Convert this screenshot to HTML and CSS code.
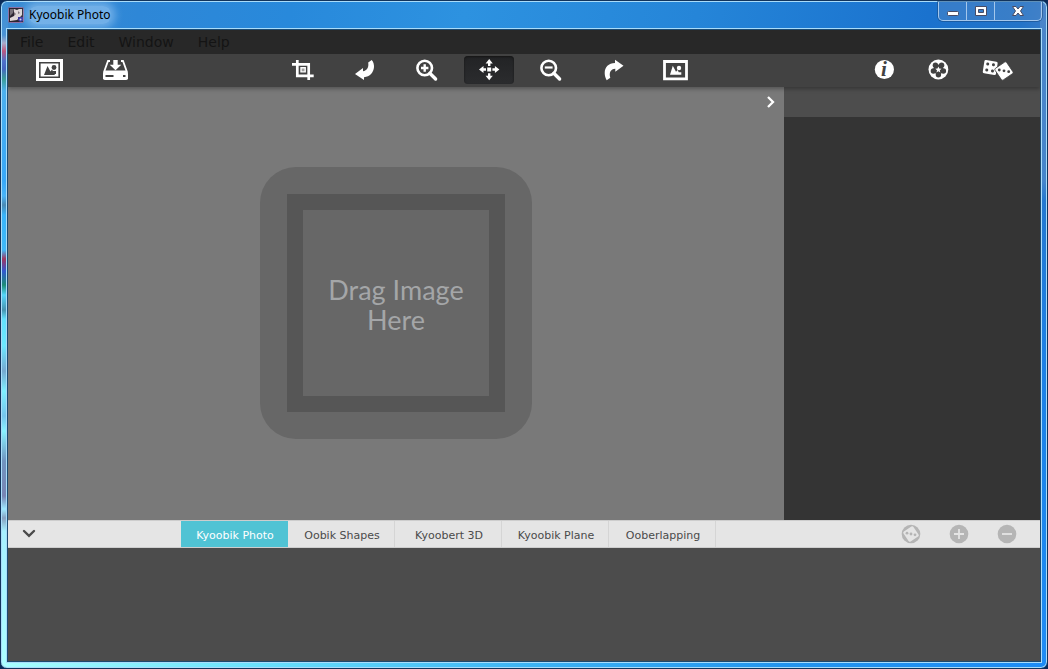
FILE: index.html
```html
<!DOCTYPE html>
<html lang="en">
<head>
<meta charset="utf-8">
<title>Kyoobik Photo</title>
<link rel="stylesheet" href="styles.css">
</head>
<body>
<div class="window">
  <header class="titlebar">
    <svg class="app-icon" width="16" height="16" viewBox="0 0 16 16" aria-hidden="true">
      <rect x=".5" y=".5" width="15" height="15" rx="1" fill="#2c2530" stroke="#8d71a5"/>
      <path d="M2 2h4l-1 4-3 3z" fill="#777078"/>
      <path d="M6 2l3 1 2-1 3 0v6l-3 3-2 2-7 1V11l4-2z" fill="#e0d8d8"/>
      <path d="M6 5l2 2-2 2zM10 4l2 2-2 1z" fill="#81777d"/>
      <path d="M10 10l5 0v4l-3 1-2-2z" fill="#37349b"/>
      <circle cx="12.500" cy="12.500" r="1" fill="#d1ccf6"/>
    </svg>
    <h1 class="title">Kyoobik Photo</h1>
    <div class="window-controls">
      <button class="control" aria-label="Minimize"><svg width="14" height="14" viewBox="0 0 14 14"><rect x="1.500" y="7.500" width="11" height="4" rx="1" fill="#fff" stroke="#484c66"/></svg></button>
      <button class="control" aria-label="Maximize"><svg width="14" height="14" viewBox="0 0 14 14"><path fill-rule="evenodd" d="M1.500 2.500h11v9h-11zM4.500 5.500h5v3h-5z" fill="#fff" stroke="#484c66"/></svg></button>
      <button class="control control-close" aria-label="Close"><svg width="14" height="14" viewBox="0 0 14 14"><path d="M1.500 2.500h3.500l2 2.500 2-2.500h3.500L9.500 7l3 4.500H9L7 9l-2 2.500H1.500l3-4.500z" fill="#fff" stroke="#484c66"/></svg></button>
    </div>
  </header>

  <div class="client">
    <nav class="menubar" aria-label="Application menu">
      <button class="menu">File</button>
      <button class="menu">Edit</button>
      <button class="menu">Window</button>
      <button class="menu">Help</button>
    </nav>

    <div class="toolbar">
      <div class="tools tools-file">
        <button class="tool" aria-label="Open image"><svg class="icon" viewBox="0 0 32 24">
          <path d="M2 1h27v22H2z" fill="#fff"/>
          <path d="M5.800 4.800h19.400v14.400H5.800z" fill="none" stroke="#424242" stroke-width="1.600"/>
          <path d="M10 17l3.500-9 3 5.500 1.500-2 3 5.500z" fill="#424242"/><circle cx="20" cy="9.500" r="2.400" fill="#424242"/><path d="M18.500 13h3.500v3h-2z" fill="#424242"/></svg></button>
        <button class="tool" aria-label="Save image"><svg class="icon" viewBox="0 0 32 24">
          <path d="M10 3H8L4.200 13.500h22.600L23 3h-2" fill="none" stroke="#fff" stroke-width="1.800"/>
          <rect x="3" y="13.500" width="25" height="8.500" rx="1.800" fill="#fff"/>
          <path d="M5.500 17h8v2h-8zM23 17h2.500v2H23z" fill="#424242"/>
          <path d="M13.300 2h4.400v4.800h3.600l-5.800 5.500-5.800-5.500h3.600z" fill="#fff"/></svg></button>
      </div>
      <div class="tools tools-view">
        <button class="tool" aria-label="Crop"><svg class="icon" viewBox="0 0 32 24">
          <path d="M5 6.300h16.700V22M10.300 2v15.800h16.400" fill="none" stroke="#fff" stroke-width="2.700"/>
          <path d="M14 9.700h4.200v4.200H14z" fill="#a2a2a2" stroke="#fff" stroke-width="1.400"/></svg></button>
        <button class="tool" aria-label="Rotate left"><svg class="icon" viewBox="0 0 32 24">
          <path d="M6 16l8-6v3.200c4-.5 6-3.700 5.200-8.700L22.700 2c1.700 2 2.500 4.500 2.300 7-.4 5.500-4 9.500-10 10.300V22z" fill="#fff"/></svg></button>
        <button class="tool" aria-label="Zoom in"><svg class="icon" viewBox="0 0 32 24">
          <circle cx="13.700" cy="10" r="7.300" fill="none" stroke="#fff" stroke-width="2.600"/><path d="M18.800 15.200l5.800 5.800" stroke="#fff" stroke-width="3.400" stroke-linecap="round"/><path d="M10 10h7.400M13.700 6.300v7.400" stroke="#fff" stroke-width="2.400"/></svg></button>
        <button class="tool tool-active" aria-label="Move" aria-pressed="true"><svg class="icon" viewBox="0 0 32 24">
          <path d="M14.200 9.500h4v4h-4zM16.200 1l3.600 4.600h-2.400V8H15V5.600h-2.400zM16.200 22.300l3.600-4.600h-2.400v-2.400H15v2.400h-2.400zM6 11.500L10.500 8v2.300H13v2.400h-2.500V15zM26.400 11.500L21.900 8v2.300h-2.500v2.400h2.500V15z" fill="#fff"/></svg></button>
        <button class="tool" aria-label="Zoom out"><svg class="icon" viewBox="0 0 32 24">
          <circle cx="13.700" cy="10" r="7.300" fill="none" stroke="#fff" stroke-width="2.600"/><path d="M18.800 15.200l5.800 5.800" stroke="#fff" stroke-width="3.400" stroke-linecap="round"/><path d="M9.800 9.500h7.800" stroke="#fff" stroke-width="2.200"/></svg></button>
        <button class="tool" aria-label="Rotate right"><svg class="icon" viewBox="0 0 32 24">
          <path d="M26.500 7.800L18 1.800V5C11.500 5.300 7.700 9 7.700 15c0 2.700.7 5.200 2 7.200l3.600-2.400c-1.500-5 .2-8.600 5-9v3z" fill="#fff"/></svg></button>
        <button class="tool" aria-label="Fit image"><svg class="icon" viewBox="0 0 32 24">
          <path d="M5.500 3.500h22v17.300h-22z" fill="none" stroke="#fff" stroke-width="2.800"/>
          <path d="M11 16.800l2.800-9 3.200 6 1.700-1.800 1 2.300h2.600v2.500z" fill="#fff"/><circle cx="20" cy="10" r="2.200" fill="#fff"/></svg></button>
      </div>
      <div class="tools tools-extra">
        <button class="tool" aria-label="Information"><svg class="icon" viewBox="0 0 32 24">
          <circle cx="15.400" cy="11.500" r="9.600" fill="#fff"/><text class="info-letter" x="15" y="18" text-anchor="middle">i</text></svg></button>
        <button class="tool" aria-label="Effects"><svg class="icon" viewBox="0 0 32 24">
          <circle cx="15.400" cy="11.500" r="9.900" fill="#fff"/>
          <g fill="#424242"><circle cx="12.400" cy="7.200" r="2.700"/><circle cx="18.600" cy="7.200" r="2.700"/><circle cx="20.400" cy="13" r="2.700"/><circle cx="15.400" cy="16.700" r="2.700"/><circle cx="10.400" cy="13" r="2.700"/><circle cx="15.400" cy="11.500" r="5"/></g>
          <path d="M15.400 8.500l.9 2.100 2.200.2-1.700 1.500.5 2.200-1.900-1.200-1.900 1.200.5-2.200-1.700-1.500 2.200-.2z" fill="#fff"/></svg></button>
        <button class="tool tool-wide" aria-label="Randomize"><svg class="icon" viewBox="0 0 32 24">
          <g transform="rotate(9 8 9.500)"><rect x="1.500" y="2.800" width="13.400" height="13.400" rx="1.500" fill="#fff"/><g fill="#424242"><circle cx="5.200" cy="6.300" r="1.500"/><circle cx="11" cy="6.300" r="1.500"/><circle cx="5.200" cy="12.500" r="1.500"/><circle cx="11" cy="12.500" r="1.500"/></g></g>
          <g transform="rotate(-34 22 13)"><rect x="15" y="6" width="14" height="14" rx="1.500" fill="#fff" stroke="#424242" stroke-width=".8"/></g>
          <g fill="#424242"><circle cx="17.300" cy="12" r="1.400"/><circle cx="22" cy="12.800" r="1.400"/><circle cx="26.700" cy="13.700" r="1.400"/></g></svg></button>
      </div>
    </div>

    <div class="workspace">
      <main class="canvas">
        <button class="panel-toggle" aria-label="Collapse side panel"><svg width="10" height="14" viewBox="0 0 10 14"><path d="M2 2l5 5-5 5" fill="none" stroke="#fff" stroke-width="2.300"/></svg></button>
        <div class="dropzone"><p class="dropzone-target">Drag Image<br>Here</p></div>
      </main>
      <aside class="sidebar" aria-label="Settings"><div class="sidebar-head"></div></aside>
    </div>

    <div class="tabbar">
      <button class="tray-toggle" aria-label="Collapse tray"><svg width="14" height="10" viewBox="0 0 14 10"><path d="M2 2l5 4.800L12 2" fill="none" stroke="#4a4a4a" stroke-width="2.400" stroke-linecap="round"/></svg></button>
      <div class="tabs" role="tablist">
        <button class="tab tab-active" role="tab" aria-selected="true">Kyoobik Photo</button>
        <button class="tab" role="tab">Oobik Shapes</button>
        <button class="tab" role="tab">Kyoobert 3D</button>
        <button class="tab" role="tab">Kyoobik Plane</button>
        <button class="tab" role="tab">Ooberlapping</button>
      </div>
      <div class="preset-actions">
        <button class="preset" aria-label="Random preset"><svg width="20" height="20" viewBox="0 0 20 20"><circle cx="10" cy="10" r="9.300" fill="#b5b5b5"/><rect x="4" y="4" width="12" height="12" rx="1.500" fill="#e5e5e5" transform="rotate(-34 10 10)"/><g fill="#b5b5b5"><circle cx="6" cy="9.200" r="1.400"/><circle cx="10" cy="10" r="1.400"/><circle cx="14" cy="10.800" r="1.400"/></g></svg></button>
        <button class="preset" aria-label="Add preset"><svg width="20" height="20" viewBox="0 0 20 20"><circle cx="10" cy="10" r="9.300" fill="#b5b5b5"/><path d="M5 10h10M10 5v10" stroke="#e5e5e5" stroke-width="1.800"/></svg></button>
        <button class="preset" aria-label="Remove preset"><svg width="20" height="20" viewBox="0 0 20 20"><circle cx="10" cy="10" r="9.300" fill="#b5b5b5"/><path d="M5 10h10" stroke="#e5e5e5" stroke-width="1.800"/></svg></button>
      </div>
    </div>
    <section class="tray" aria-label="Presets"></section>
  </div>
</div>
</body>
</html>
```

FILE: styles.css
```css
* { box-sizing: border-box; }

body {
  margin: 0;
  background: #0b2a58;
  font-family: "DejaVu Sans", Verdana, sans-serif;
}

button {
  margin: 0;
  padding: 0;
  border: 0;
  background: none;
  color: inherit;
  font: inherit;
}

svg { display: block; }

/* Glass window frame */
.window {
  display: flex;
  flex-direction: column;
  min-height: 100vh;
  padding: 1px 5px 6px;
  border: 1px solid #12345c;
  border-radius: 7px;
  box-shadow: inset 0 0 0 1px #a9dcfa;
  background:
    linear-gradient(180deg, #3d8fd6 0, #4a93d5 34px, #a7accb 42px, #bd587f 50px, #4e71ca 60px, #4666c0 68px, #3b9d98 78px, #4cb0ee 90px, #38a8f8 180px, #49b4f8 195px, #4a8ab5 204px, #38b4fa 214px, #40b8f8 249px, #a03660 258px, #3258d0 270px, #1c8c77 284px, #55d5fa 294px, #4793b0 309px, #62e0fc 318px, #6ce8ff 345px, #76a9d0 370px, #7ef0ff 390px, #76c5ec 415px, #88f2ff 430px, #7094c0 460px, #7885b4 495px, #9de9ff 508px, #86a0c0 517px, #a6f0ff 530px, #abffff 100%) left / 7px 100% no-repeat,
    linear-gradient(180deg, #4b85c9 0, #4685cb 180px, #2478d0 200px, #1e80e4 350px, #1d8cf5 100%) right / 7px 100% no-repeat,
    linear-gradient(90deg, #a8ffff 0, #68e0fc 25%, #3db4f4 50%, #2294ee 75%, #1d8cf5 100%) bottom / 100% 8px no-repeat,
    linear-gradient(100deg, #3b8cd3 0, #2e87d7 12%, #2889db 25%, #2d92e0 40%, #2585d8 60%, #1a72ce 80%, #2374c8 88%, #4b82c8 93%, #4b82c8 100%);
}

.titlebar {
  display: flex;
  align-items: flex-start;
  height: 26px;
}

.app-icon { margin: 5px 5px 0 2px; }

.title {
  margin: 4px 0 0;
  font: 400 12px/18px "Noto Sans", sans-serif;
  color: #000;
  background: rgb(190 225 255 / 45%);
  border-radius: 8px;
  box-shadow: 0 0 8px 4px rgb(190 225 255 / 45%);
}

.window-controls {
  display: flex;
  margin-left: auto;
  border: 1px solid #a4c7ec;
  border-top: 0;
  border-radius: 0 0 5px 5px;
  background: rgb(80 135 200 / 50%);
  box-shadow: 0 0 0 1px rgb(22 68 120 / 50%);
}

.control {
  display: grid;
  place-items: center;
  width: 28px;
  height: 18px;
  border-right: 1px solid #a4c7ec;
}

.control-close {
  width: 46px;
  border-right: 0;
}

.client {
  display: flex;
  flex: 1;
  flex-direction: column;
  margin: 1px 1px 0;
  border: 1px solid #1c4a70;
  outline: 1px solid #a9dcfa;
  background: #4c4c4c;
}

.menubar {
  display: flex;
  height: 24px;
  background: #282828;
}

.menu {
  padding: 0 12px;
  font-size: 14px;
  color: #141414;
}

/* Toolbar */
.toolbar {
  position: relative;
  z-index: 1;
  display: flex;
  justify-content: space-between;
  padding: 2px 10px 3px 9px;
  background: #424242;
  box-shadow: 0 2px 4px rgb(0 0 0 / 30%);
  clip-path: inset(0 0 -8px);
}

.tools { display: flex; }

.tool {
  display: grid;
  place-items: center;
  width: 54px;
  height: 28px;
}

.tools-file .tool { width: 66px; }
.tools-view { margin-right: 29px; }
.tools-view .tool { width: 50px; margin: 0 6px; }
.tools-extra .tool-wide { width: 64px; }

.tool-active {
  border-radius: 4px;
  background: linear-gradient(#222325, #2b2c2e);
  box-shadow: inset 0 1px 2px #151515;
}

.icon {
  width: 32px;
  height: 24px;
}

.info-letter {
  font: italic 700 21px "Liberation Serif", serif;
  fill: #424242;
}

/* Work area */
.workspace {
  display: flex;
  flex: 1;
}

.canvas {
  position: relative;
  display: grid;
  flex: 1;
  place-items: center;
  padding-bottom: 2px;
  background: #797979;
}

.panel-toggle {
  position: absolute;
  top: 8px;
  right: 8px;
}

.dropzone {
  padding: 27px;
  border-radius: 36px;
  background: #676767;
}

.dropzone-target {
  display: grid;
  place-content: center;
  width: 218px;
  height: 218px;
  margin: 0;
  padding-top: 4px;
  border: 16px solid #565656;
  font: 400 27px/30px Lato, sans-serif;
  color: #a4a6a8;
  text-align: center;
}

.sidebar {
  width: 256px;
  background: #343434;
}

.sidebar-head {
  height: 30px;
  background: #4d4d4d;
}

/* Tabs */
.tabbar {
  display: flex;
  align-items: stretch;
  height: 28px;
  border: 1px solid #cdcdcd;
  border-width: 1px 0;
  background: #e5e5e5;
}

.tray-toggle {
  width: 41px;
  padding-left: 14px;
}

.tabs {
  display: flex;
  margin-left: 132px;
}

.tab {
  width: 107px;
  padding: 2px 0 0 2px;
  border-right: 1px solid #d5d5d5;
  font-size: 11px;
  color: #4a4a4a;
}

.tab-active {
  border-right-color: #50c3d4;
  background: #50c3d4;
  color: #fff;
}

.preset-actions {
  display: flex;
  margin-left: auto;
  padding-right: 9px;
}

.preset {
  display: grid;
  place-items: center;
  width: 48px;
}

.tray {
  min-height: 113px;
  background: #4c4c4c;
}
```
